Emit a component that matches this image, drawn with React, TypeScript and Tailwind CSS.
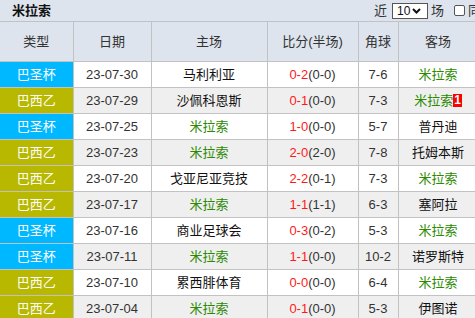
import React from 'react';

type Row = {
  league: string;
  date: string;
  home: string;
  score: string;
  half: string;
  corner: string;
  away: string;
  badge?: string;
};

const TEAM = '米拉索';

const rows: Row[] = [
  { league: '巴圣杯', date: '23-07-30', home: '马利利亚', score: '0-2', half: '(0-0)', corner: '7-6', away: TEAM },
  { league: '巴西乙', date: '23-07-29', home: '沙佩科恩斯', score: '0-1', half: '(0-0)', corner: '7-3', away: TEAM, badge: '1' },
  { league: '巴圣杯', date: '23-07-25', home: TEAM, score: '1-0', half: '(0-0)', corner: '5-7', away: '普丹迪' },
  { league: '巴西乙', date: '23-07-23', home: TEAM, score: '2-0', half: '(2-0)', corner: '7-8', away: '托姆本斯' },
  { league: '巴西乙', date: '23-07-20', home: '戈亚尼亚竞技', score: '2-2', half: '(0-1)', corner: '7-3', away: TEAM },
  { league: '巴西乙', date: '23-07-17', home: TEAM, score: '1-1', half: '(1-1)', corner: '6-3', away: '塞阿拉' },
  { league: '巴圣杯', date: '23-07-16', home: '商业足球会', score: '0-3', half: '(0-2)', corner: '5-3', away: TEAM },
  { league: '巴圣杯', date: '23-07-11', home: TEAM, score: '1-1', half: '(0-0)', corner: '10-2', away: '诺罗斯特' },
  { league: '巴西乙', date: '23-07-10', home: '累西腓体育', score: '0-0', half: '(0-0)', corner: '6-4', away: TEAM },
  { league: '巴西乙', date: '23-07-04', home: TEAM, score: '0-1', half: '(0-0)', corner: '5-3', away: '伊图诺' },
];

const cell = 'border border-[#c2c2c2] text-center p-0';

function Team({ name }: { name: string }) {
  return <span className={name === TEAM ? 'text-[#2b8a00]' : 'text-[#111]'}>{name}</span>;
}

export default function App() {
  return (
    <div
      className="w-[475px] h-[318px] overflow-hidden bg-white text-[12px] text-[#333]"
      style={{ fontFamily: 'Tahoma, "Liberation Sans", "Noto Sans CJK SC", sans-serif' }}
    >
      {/* Title bar */}
      <div className="h-[22px] bg-[#dde4ed] flex items-center justify-between pl-[12px] border-b border-[#c2c2c2] whitespace-nowrap overflow-hidden">
        <span className="font-bold text-[13px] text-[#111]">米拉索</span>
        <div className="flex items-center -mr-[32px]">
          <span className="text-[13px]">近</span>
          <div className="ml-[5px] w-[36px] h-[16px] border border-[#555] bg-white flex items-center pl-[4px] text-[12px] text-[#111] leading-none">
            10
            <svg className="ml-[2px]" width="9" height="6" viewBox="0 0 9 6">
              <path d="M1 1 L4.5 4.5 L8 1" stroke="#111" strokeWidth="2" fill="none" />
            </svg>
          </div>
          <span className="ml-[3px] text-[13px]">场</span>
          <span className="ml-[10px] w-[11px] h-[11px] border border-[#555] rounded-[2px] bg-white" />
          <span className="ml-[3px] text-[13px]">同主客</span>
        </div>
      </div>

      <table className="border-collapse table-fixed w-[478px] -mt-px">
        <colgroup>
          <col className="w-[73px]" />
          <col className="w-[78px]" />
          <col className="w-[116px]" />
          <col className="w-[91px]" />
          <col className="w-[40px]" />
          <col className="w-[80px]" />
        </colgroup>
        <thead>
          <tr className="h-[40px] bg-[#dde4ed] text-[13px] text-[#333]">
            <th className={`${cell} border-l-0 font-normal`}>类型</th>
            <th className={`${cell} font-normal`}>日期</th>
            <th className={`${cell} font-normal`}>主场</th>
            <th className={`${cell} font-normal`}>比分(半场)</th>
            <th className={`${cell} font-normal`}>角球</th>
            <th className={`${cell} font-normal`}>客场</th>
          </tr>
        </thead>
        <tbody>
          {rows.map((r, i) => (
            <tr key={i} className={`h-[26px] ${i % 2 === 1 ? 'bg-[#efefef]' : 'bg-white'}`}>
              <td
                className={`${cell} border-l-0 text-white text-[13px] ${
                  r.league === '巴圣杯' ? 'bg-[#00b8ff]' : 'bg-[#b8b800]'
                }`}
              >
                {r.league}
              </td>
              <td className={`${cell} text-[13px] text-[#333]`}>{r.date}</td>
              <td className={`${cell} text-[13px]`}>
                <Team name={r.home} />
              </td>
              <td className={`${cell} text-[13px]`}>
                <span className="text-[#ff1a1a]">{r.score}</span>
                <span className="text-[#333]">{r.half}</span>
              </td>
              <td className={`${cell} text-[13px] text-[#333]`}>{r.corner}</td>
              <td className={`${cell} text-[13px]`}>
                <Team name={r.away} />
                {r.badge && (
                  <span className="inline-block bg-[#ff0000] text-white font-bold text-[12px] leading-[13px] px-[1px] align-[1px]">
                    {r.badge}
                  </span>
                )}
              </td>
            </tr>
          ))}
        </tbody>
      </table>
    </div>
  );
}
